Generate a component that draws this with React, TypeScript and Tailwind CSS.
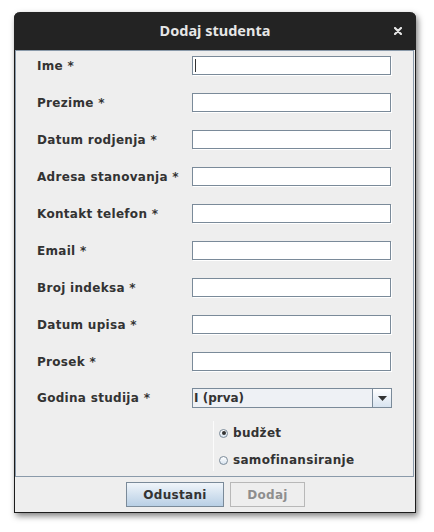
import React from "react";

const labels = [
  "Ime *",
  "Prezime *",
  "Datum rodjenja *",
  "Adresa stanovanja *",
  "Kontakt telefon *",
  "Email *",
  "Broj indeksa *",
  "Datum upisa *",
  "Prosek *",
];

const dv = { fontFamily: '"DejaVu Sans", sans-serif' };

export default function App() {
  return (
    <div className="w-[434px] h-[532px] bg-white relative" style={dv}>
      <div className="absolute left-[14px] top-[12px] w-[402px] h-[501px] flex flex-col rounded-t-[6px] shadow-[2px_3px_6px_rgba(0,0,0,0.5)] bg-[#eeeeee] border-x border-b border-[#1c1c1c]">
        {/* title bar */}
        <div className="h-[38px] shrink-0 bg-[#232323] rounded-t-[6px] flex items-center justify-center relative -mx-px">
          <span
            className="text-[14.5px] font-bold text-[#e6e6e6]"
            style={{ fontFamily: '"Noto Sans", sans-serif' }}
          >
            Dodaj studenta
          </span>
          <svg className="absolute right-[14px] top-[15px]" width="8" height="8" viewBox="0 0 8 8">
            <path d="M1 1 L7 7 M7 1 L1 7" stroke="#e6e6e6" strokeWidth="2.2" strokeLinecap="round" />
          </svg>
        </div>
        {/* form panel */}
        <div className="h-[427px] shrink-0 border border-[#8a9aaa] mr-px flex flex-col pt-[5px] pl-[21px]">
          {labels.map((l, i) => (
            <div key={l} className="h-[19px] flex items-center mb-[18px]">
              <span className="w-[155px] text-[12px] font-bold text-[#333333] tracking-[0.3px]">{l}</span>
              <div className="w-[199px] h-[19px] bg-white border border-[#7a8a99] shadow-[1px_1px_0_#ffffff] relative">
                {i === 0 && <div className="absolute left-[2px] top-[2px] w-px h-[13px] bg-[#333]" />}
              </div>
            </div>
          ))}
          <div className="h-[20px] flex items-center -mt-[1px]">
            <span className="w-[155px] text-[12px] font-bold text-[#333333] tracking-[0.3px]">Godina studija *</span>
            <div className="w-[200px] h-[20px] bg-[#eef1f5] border border-[#7a8a99] flex">
              <span className="flex-1 text-[12px] font-bold text-[#333333] pl-[1px] leading-[18px]">I (prva)</span>
              <div className="w-[19px] h-full border-l border-[#7a8a99] bg-gradient-to-b from-[#ffffff] to-[#d8e4f0] flex items-center justify-center">
                <svg width="9" height="5" viewBox="0 0 9 5">
                  <path d="M0 0 H9 L4.5 5 Z" fill="#333333" />
                </svg>
              </div>
            </div>
          </div>
          <div className="ml-[176px] mt-[13px] h-[50px] border-l border-[#fbfbfb] flex flex-col pl-[5px] pt-[4px] gap-[11px]">
            <div className="flex items-center gap-[5px] h-[16px]">
              <div className="w-[9px] h-[9px] rounded-full border border-[#7a8a99] bg-gradient-to-b from-white to-[#d8e4f0] flex items-center justify-center">
                <div className="w-[4px] h-[4px] rounded-full bg-[#333]" />
              </div>
              <span className="text-[12px] font-bold text-[#333333] tracking-[0.3px]">budžet</span>
            </div>
            <div className="flex items-center gap-[5px] h-[16px]">
              <div className="w-[9px] h-[9px] rounded-full border border-[#7a8a99] bg-gradient-to-b from-white to-[#d8e4f0]" />
              <span className="text-[12px] font-bold text-[#333333] tracking-[0.3px]">samofinansiranje</span>
            </div>
          </div>
        </div>
        {/* buttons */}
        <div className="flex-1 flex items-start justify-center gap-[6px] pt-[5px] -mr-px">
          <button className="w-[98px] h-[25px] border border-[#7a8a99] bg-gradient-to-b from-[#f0f5fa] to-[#b8cfe5] text-[12px] font-bold text-[#333333] tracking-[0.3px]">
            Odustani
          </button>
          <button className="w-[75px] h-[25px] border border-[#b8b8b8] bg-[#eeeeee] text-[12px] font-bold text-[#8e8e8e] tracking-[0.3px]">
            Dodaj
          </button>
        </div>
      </div>
    </div>
  );
}
